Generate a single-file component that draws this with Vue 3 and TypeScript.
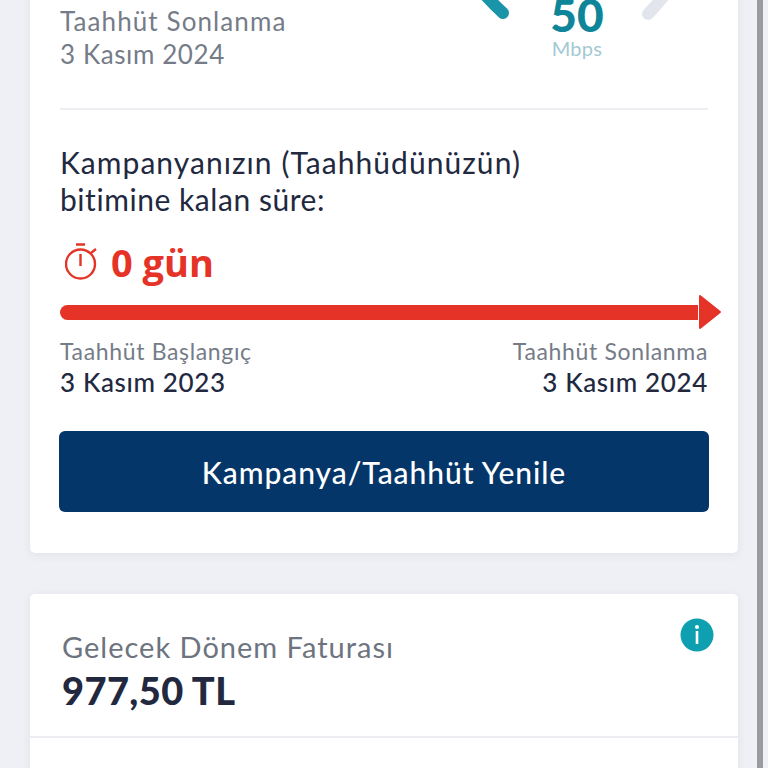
<script setup lang="ts">
const dates = [
  { label: 'Taahhüt Başlangıç', value: '3 Kasım 2023' },
  { label: 'Taahhüt Sonlanma', value: '3 Kasım 2024' },
]
</script>

<template>
  <div class="page">
    <section class="card commitment">
      <div class="summary">
        <div class="end-date">
          <span class="end-label">Taahhüt Sonlanma</span>
          <span>3 Kasım 2024</span>
        </div>
        <div class="speed">
          <svg class="gauge" width="220" height="60" viewBox="0 0 220 60" aria-hidden="true">
            <path d="M36 15 Q25 5 12 -10" class="gauge-on" />
            <path d="M181 16 Q192 5 206 -14" class="gauge-off" />
          </svg>
          <strong>50</strong>
          <span>Mbps</span>
        </div>
      </div>

      <hr class="divider" />

      <p class="remaining-title">Kampanyanızın (Taahhüdünüzün)<br /><span>bitimine kalan süre:</span></p>

      <div class="remaining">
        <svg width="34" height="38" viewBox="0 0 34 38" aria-hidden="true">
          <circle cx="15.5" cy="21" r="14.5" fill="none" stroke="#e53327" stroke-width="2.4" />
          <path d="M11 1.5h9M15.5 11v12M26 10l5-4" fill="none" stroke="#e53327" stroke-width="2.4" />
        </svg>
        <b>0 gün</b>
      </div>

      <div class="progress">
        <div class="progress-line"></div>
        <svg class="progress-head" width="24" height="36" viewBox="0 0 24 36" aria-hidden="true">
          <path d="M2 2 L22 18 L2 34 Z" fill="#e53327" stroke="#e53327" stroke-width="2" stroke-linejoin="round" />
        </svg>
      </div>

      <div class="dates">
        <div v-for="d in dates" :key="d.label" class="date">
          <span>{{ d.label }}</span>
          <b>{{ d.value }}</b>
        </div>
      </div>

      <button class="renew">Kampanya/Taahhüt Yenile</button>
    </section>

    <section class="card bill">
      <div class="bill-main">
        <span>Gelecek Dönem Faturası</span>
        <b>977,50 TL</b>
        <svg class="info" width="34" height="34" viewBox="0 0 34 34" aria-hidden="true">
          <circle cx="17" cy="17" r="16.5" fill="#0e9fb0" />
          <circle cx="17" cy="9" r="2" fill="#fff" />
          <rect x="15.7" y="13" width="2.6" height="13" fill="#fff" />
        </svg>
      </div>
      <div class="bill-rest"></div>
    </section>

    <div class="scrollbar"></div>
  </div>
</template>

<style>
html, body { margin: 0; overflow: hidden; background: #eef0f5; }
</style>

<style scoped>
.page {
  position: relative;
  height: 768px;
  overflow: hidden;
  padding: 0 30px;
  background: #eef0f5;
  font-family: Lato, sans-serif;
  color: #22293f;
}
.card {
  width: 708px;
  background: #fff;
  border-radius: 5px;
  box-shadow: 0 2px 10px rgba(40, 50, 80, .07);
}
.commitment {
  margin-top: -20px;
  padding: 20px 30px 41px;
  box-sizing: border-box;
  height: 573px;
}
.summary {
  display: flex;
  justify-content: space-between;
  height: 108px;
}
.end-date {
  display: flex;
  flex-direction: column;
  padding-top: 5px;
  font-size: 26px;
  line-height: 33px;
  letter-spacing: .6px;
  color: #757c88;
}
.end-label { letter-spacing: 1.1px; }
.speed {
  position: relative;
  width: 220px;
  margin-right: 21px;
  display: flex;
  flex-direction: column;
  align-items: center;
  color: #0f8599;
}
.gauge { position: absolute; left: 0; top: -2px; overflow: visible; }
.gauge path { fill: none; stroke-width: 12; stroke-linecap: round; }
.gauge-on { stroke: #1a94a8; }
.gauge-off { stroke: #e2e5ec; }
.speed strong {
  margin-top: -7px;
  font-size: 46px;
  line-height: 44px;
  font-weight: 900;
}
.speed span {
  font-size: 20px;
  line-height: 22px;
  letter-spacing: .3px;
  color: #a3c9d3;
}
.divider {
  margin: 0;
  border: 0;
  border-top: 2px solid #eceef1;
}
.remaining-title {
  margin: 34px 0 0;
  font-size: 30px;
  line-height: 37px;
  letter-spacing: 1.05px;
  color: #22293f;
}
.remaining-title span { letter-spacing: .55px; }
.remaining {
  display: flex;
  align-items: center;
  gap: 12px;
  margin-top: 22px;
  margin-left: 5px;
  height: 44px;
  color: #e53327;
}
.remaining b {
  font-family: "Open Sans", sans-serif;
  font-size: 38px;
  font-weight: 700;
}
.progress {
  display: flex;
  align-items: center;
  margin-top: 10px;
  width: 662px;
}
.progress-line {
  flex: 1;
  height: 15px;
  background: #e53327;
  border-radius: 8px 0 0 8px;
}
.progress-head { flex: none; }
.dates {
  display: flex;
  justify-content: space-between;
  margin-top: 6px;
}
.date {
  display: flex;
  flex-direction: column;
}
.date:last-child { text-align: right; }
.date span {
  font-size: 23px;
  line-height: 30px;
  letter-spacing: .65px;
  color: #757c88;
}
.date b {
  font-weight: 500;
  font-size: 26px;
  line-height: 33px;
  letter-spacing: .65px;
}
.renew {
  display: block;
  width: 650px;
  height: 81px;
  margin: 32px 0 0 -1px;
  border: 0;
  border-radius: 6px;
  background: #053669;
  color: #fff;
  font: 500 30px Lato, sans-serif;
  letter-spacing: .95px;
}
.bill {
  margin-top: 41px;
}
.bill-main {
  position: relative;
  display: flex;
  flex-direction: column;
  height: 144px;
  padding: 33px 32px 0;
  box-sizing: border-box;
  border-bottom: 2px solid #eceef1;
}
.bill-main span {
  font-size: 29px;
  line-height: 40px;
  letter-spacing: 1px;
  color: #6d7480;
}
.bill-main b {
  margin-top: 1px;
  font-size: 38px;
  line-height: 44px;
  letter-spacing: .4px;
  font-weight: 900;
}
.info { position: absolute; top: 24px; right: 24px; }
.bill-rest { height: 60px; }
.scrollbar {
  position: absolute;
  top: 0;
  right: 5px;
  width: 6px;
  height: 768px;
  background: #9b9b9f;
}
</style>
